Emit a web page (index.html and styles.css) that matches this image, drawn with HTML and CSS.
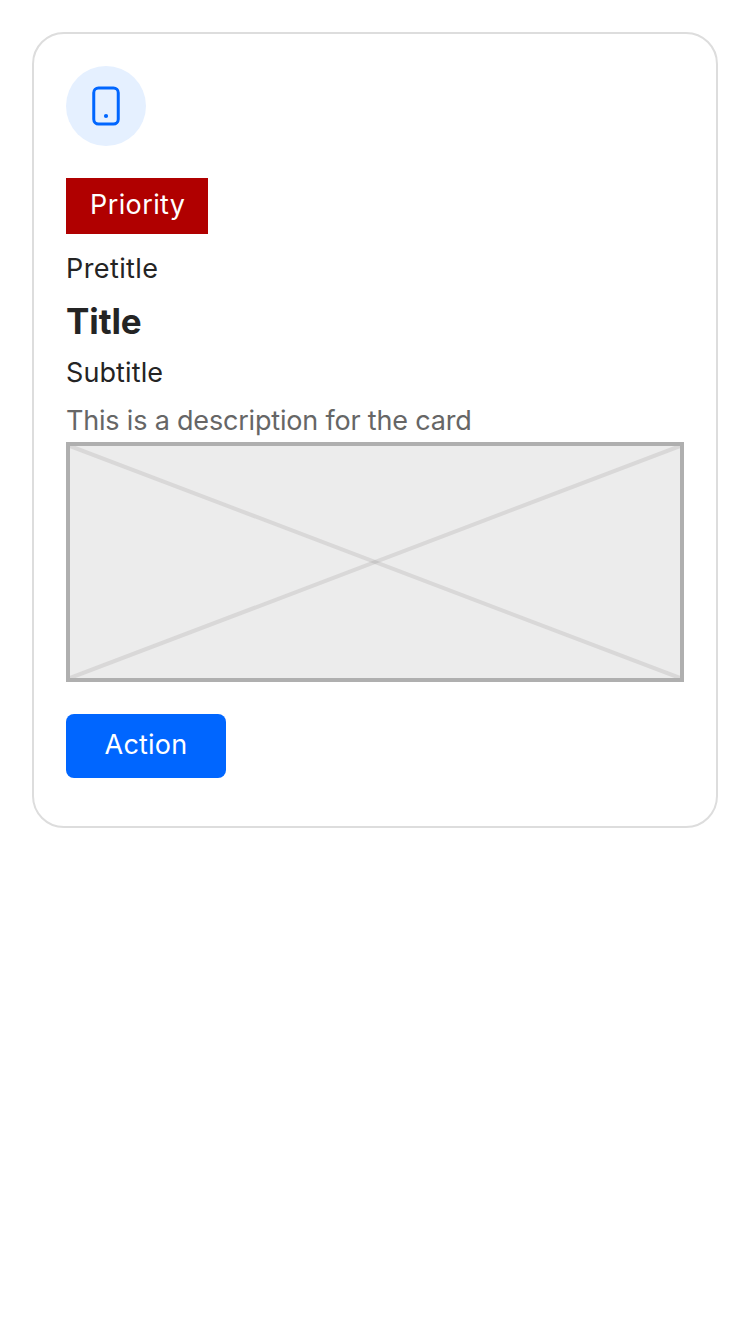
FILE: index.html
```html
<!DOCTYPE html>
<html lang="en">
<head>
<meta charset="utf-8">
<title>Card</title>
<link rel="stylesheet" href="styles.css">
</head>
<body>
<article class="card">
  <div class="asset">
    <svg width="40" height="40" viewBox="0 0 40 40" fill="none">
      <rect x="7.75" y="2" width="24.5" height="36" rx="4.8" stroke="#0066ff" stroke-width="3"/>
      <circle cx="20" cy="30" r="2.1" fill="#0066ff"/>
    </svg>
  </div>
  <div class="badge">Priority</div>
  <div class="pretitle">Pretitle</div>
  <h2 class="title">Title</h2>
  <div class="subtitle">Subtitle</div>
  <p class="description">This is a description for the card</p>
  <div class="slot">
    <svg class="cross" viewBox="0 0 610 232" preserveAspectRatio="none" stroke="#d9d8d8" stroke-width="4">
      <path d="M0 0L610 232"/>
      <path d="M0 232L610 0"/>
      <path d="M299.5 116L305 113.9L310.5 116L305 118.1Z" fill="#c8c7c7" stroke="none"/>
    </svg>
  </div>
  <button class="action">Action</button>
</article>
</body>
</html>
```
FILE: styles.css
```css
* { box-sizing: border-box; }
body {
  margin: 0;
  padding: 32px;
  background: #fff;
  color: #242424;
  font: 400 27px/36px Inter, "Liberation Sans", sans-serif;
}
.card {
  display: flex;
  flex-direction: column;
  align-items: flex-start;
  height: 796px;
  padding: 32px;
  border: 2px solid #dddddd;
  border-radius: 32px;
}
.asset {
  display: flex;
  align-items: center;
  justify-content: center;
  width: 80px;
  height: 80px;
  border-radius: 50%;
  background: #e5f0ff;
}
.badge {
  width: 142px;
  height: 56px;
  margin-top: 32px;
  padding: 9px 0 0 24px;
  background: #b00000;
  color: #fff;
  letter-spacing: 0.4px;
}
.pretitle { margin-top: 17px; letter-spacing: 0.4px; }
.title {
  margin: 10px 0 0;
  font-size: 35px;
  line-height: 48px;
  font-weight: 700;
  letter-spacing: -0.1px;
}
.subtitle { margin-top: 10px; letter-spacing: 0.1px; }
.description { margin: 12px 0 3px; color: #666; letter-spacing: -0.19px; }
.slot {
  width: 100%;
  height: 240px;
  border: 4px solid #afafaf;
  background: #ececec;
}
.cross { display: block; width: 100%; height: 100%; }
.action {
  width: 160px;
  height: 64px;
  margin-top: 32px;
  padding: 0 0 2px;
  border: 0;
  border-radius: 8px;
  background: #0066ff;
  color: #fff;
  font: inherit;
  letter-spacing: 0.2px;
}
```
